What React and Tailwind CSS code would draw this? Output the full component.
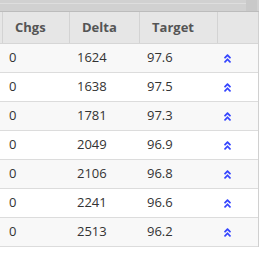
import React from 'react';
import { FaAngleDoubleUp } from 'react-icons/fa';

const ROWS = [
  { chgs: 0, delta: 1624, target: '97.6' },
  { chgs: 0, delta: 1638, target: '97.5' },
  { chgs: 0, delta: 1781, target: '97.3' },
  { chgs: 0, delta: 2049, target: '96.9' },
  { chgs: 0, delta: 2106, target: '96.8' },
  { chgs: 0, delta: 2241, target: '96.6' },
  { chgs: 0, delta: 2513, target: '96.2' },
];

const COLS = 'grid grid-cols-[3px_67px_70px_78px_40px]';

export default function App() {
  return (
    <div className="w-[259px] h-[254px] bg-white overflow-hidden text-[13px]" style={{ fontFamily: '"Open Sans", sans-serif' }}>
      {/* scroll strip */}
      <div className="h-[12px] bg-[#d1d1d1] border-b border-[#bcbcbc] flex">
        <div className="w-[246px] h-[4px] border-b border-[#dedede]" />
        <div className="w-[11px] bg-[#c9c9c9]" />
      </div>

      <div className="w-[259px] border-r border-[#d0d0d0]">
        {/* header */}
        <div className={`${COLS} h-[32px] bg-[#e6e6e6] border-b border-[#d6d6d6] font-bold text-[#555]`}>
          <div className="border-r border-[#d3d3d3]" />
          <div className="border-r border-[#d3d3d3] pl-[12px] flex items-center">Chgs</div>
          <div className="border-r border-[#d3d3d3] pl-[12px] flex items-center">Delta</div>
          <div className="border-r border-[#d3d3d3] pl-[12px] flex items-center">Target</div>
          <div />
        </div>

        {ROWS.map((r, i) => (
          <div
            key={r.delta}
            className={`${COLS} h-[29px] border-b border-[#dcdcdc] text-[#333] ${i % 2 === 0 ? 'bg-[#f8f8f8]' : 'bg-white'}`}
          >
            <div />
            <div className="pl-[6px] flex items-center">{r.chgs}</div>
            <div className="pl-[7px] flex items-center">{r.delta}</div>
            <div className="pl-[7px] flex items-center">{r.target}</div>
            <div className="pl-[4px] flex items-center text-[#3344ff]">
              <FaAngleDoubleUp size={11} />
            </div>
          </div>
        ))}
      </div>
    </div>
  );
}
